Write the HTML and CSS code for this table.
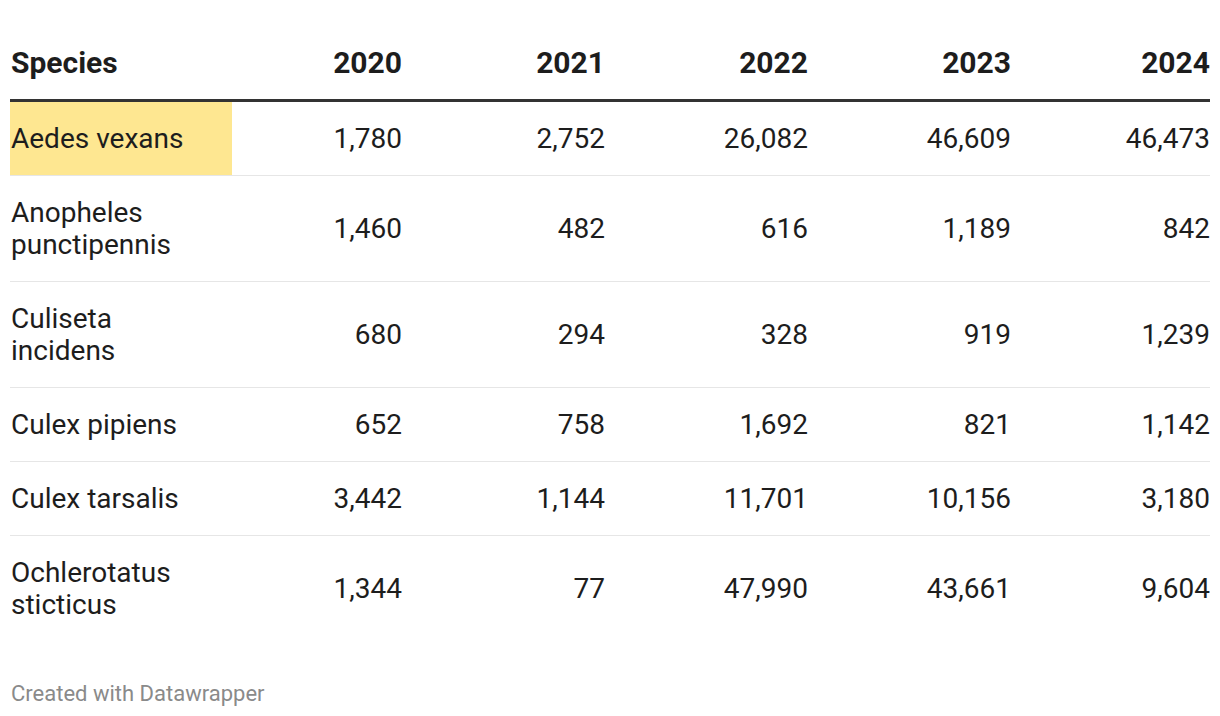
FILE: index.html
```html
<!DOCTYPE html>
<html>
<head>
<meta charset="utf-8">
<link rel="stylesheet" href="styles.css">
</head>
<body>
<div class="chart">
  <table class="data">
    <colgroup>
      <col class="c-species"><col class="c-2020"><col class="c-yr"><col class="c-yr"><col class="c-yr"><col class="c-last">
    </colgroup>
    <thead>
      <tr><th class="name">Species</th><th>2020</th><th>2021</th><th>2022</th><th>2023</th><th>2024</th></tr>
    </thead>
    <tbody>
      <tr><td class="name hl">Aedes vexans</td><td>1,780</td><td>2,752</td><td>26,082</td><td>46,609</td><td>46,473</td></tr>
      <tr><td class="name">Anopheles<br>punctipennis</td><td>1,460</td><td>482</td><td>616</td><td>1,189</td><td>842</td></tr>
      <tr><td class="name">Culiseta<br>incidens</td><td>680</td><td>294</td><td>328</td><td>919</td><td>1,239</td></tr>
      <tr><td class="name">Culex pipiens</td><td>652</td><td>758</td><td>1,692</td><td>821</td><td>1,142</td></tr>
      <tr><td class="name">Culex tarsalis</td><td>3,442</td><td>1,144</td><td>11,701</td><td>10,156</td><td>3,180</td></tr>
      <tr class="last"><td class="name">Ochlerotatus<br>sticticus</td><td>1,344</td><td>77</td><td>47,990</td><td>43,661</td><td>9,604</td></tr>
    </tbody>
  </table>
  <div class="footer">Created with Datawrapper</div>
</div>
</body>
</html>
```
FILE: styles.css
```css
html, body {
  margin: 0;
  padding: 0;
  background: #ffffff;
}
body {
  font-family: Roboto, "Liberation Sans", sans-serif;
  color: #1d1d1d;
}
.chart {
  padding: 30px 10px 0 10px;
}
.data {
  width: 1200px;
  border-collapse: collapse;
  table-layout: fixed;
}
.c-species { width: 222px; }
.c-2020 { width: 170px; }
.c-yr { width: 203px; }
.c-last { width: 199px; }
.data th {
  font-size: 30px;
  font-weight: 700;
  text-align: right;
  line-height: 32px;
  padding: 17px 0 20px 0;
  border-bottom: 3px solid #333333;
  color: #1d1d1d;
}
.data td {
  font-size: 28px;
  text-align: right;
  line-height: 32px;
  padding: 21px 0 20px 0;
  border-bottom: 1px solid #e6e6e6;
  vertical-align: middle;
}
.data .name {
  text-align: left;
  padding-left: 1px;
}
.data td.hl {
  background: #fee791;
}
.data tr.last td {
  border-bottom: none;
}
.footer {
  margin-top: 40px;
  font-size: 22px;
  color: #8a8a8a;
  padding-left: 1px;
}
```
